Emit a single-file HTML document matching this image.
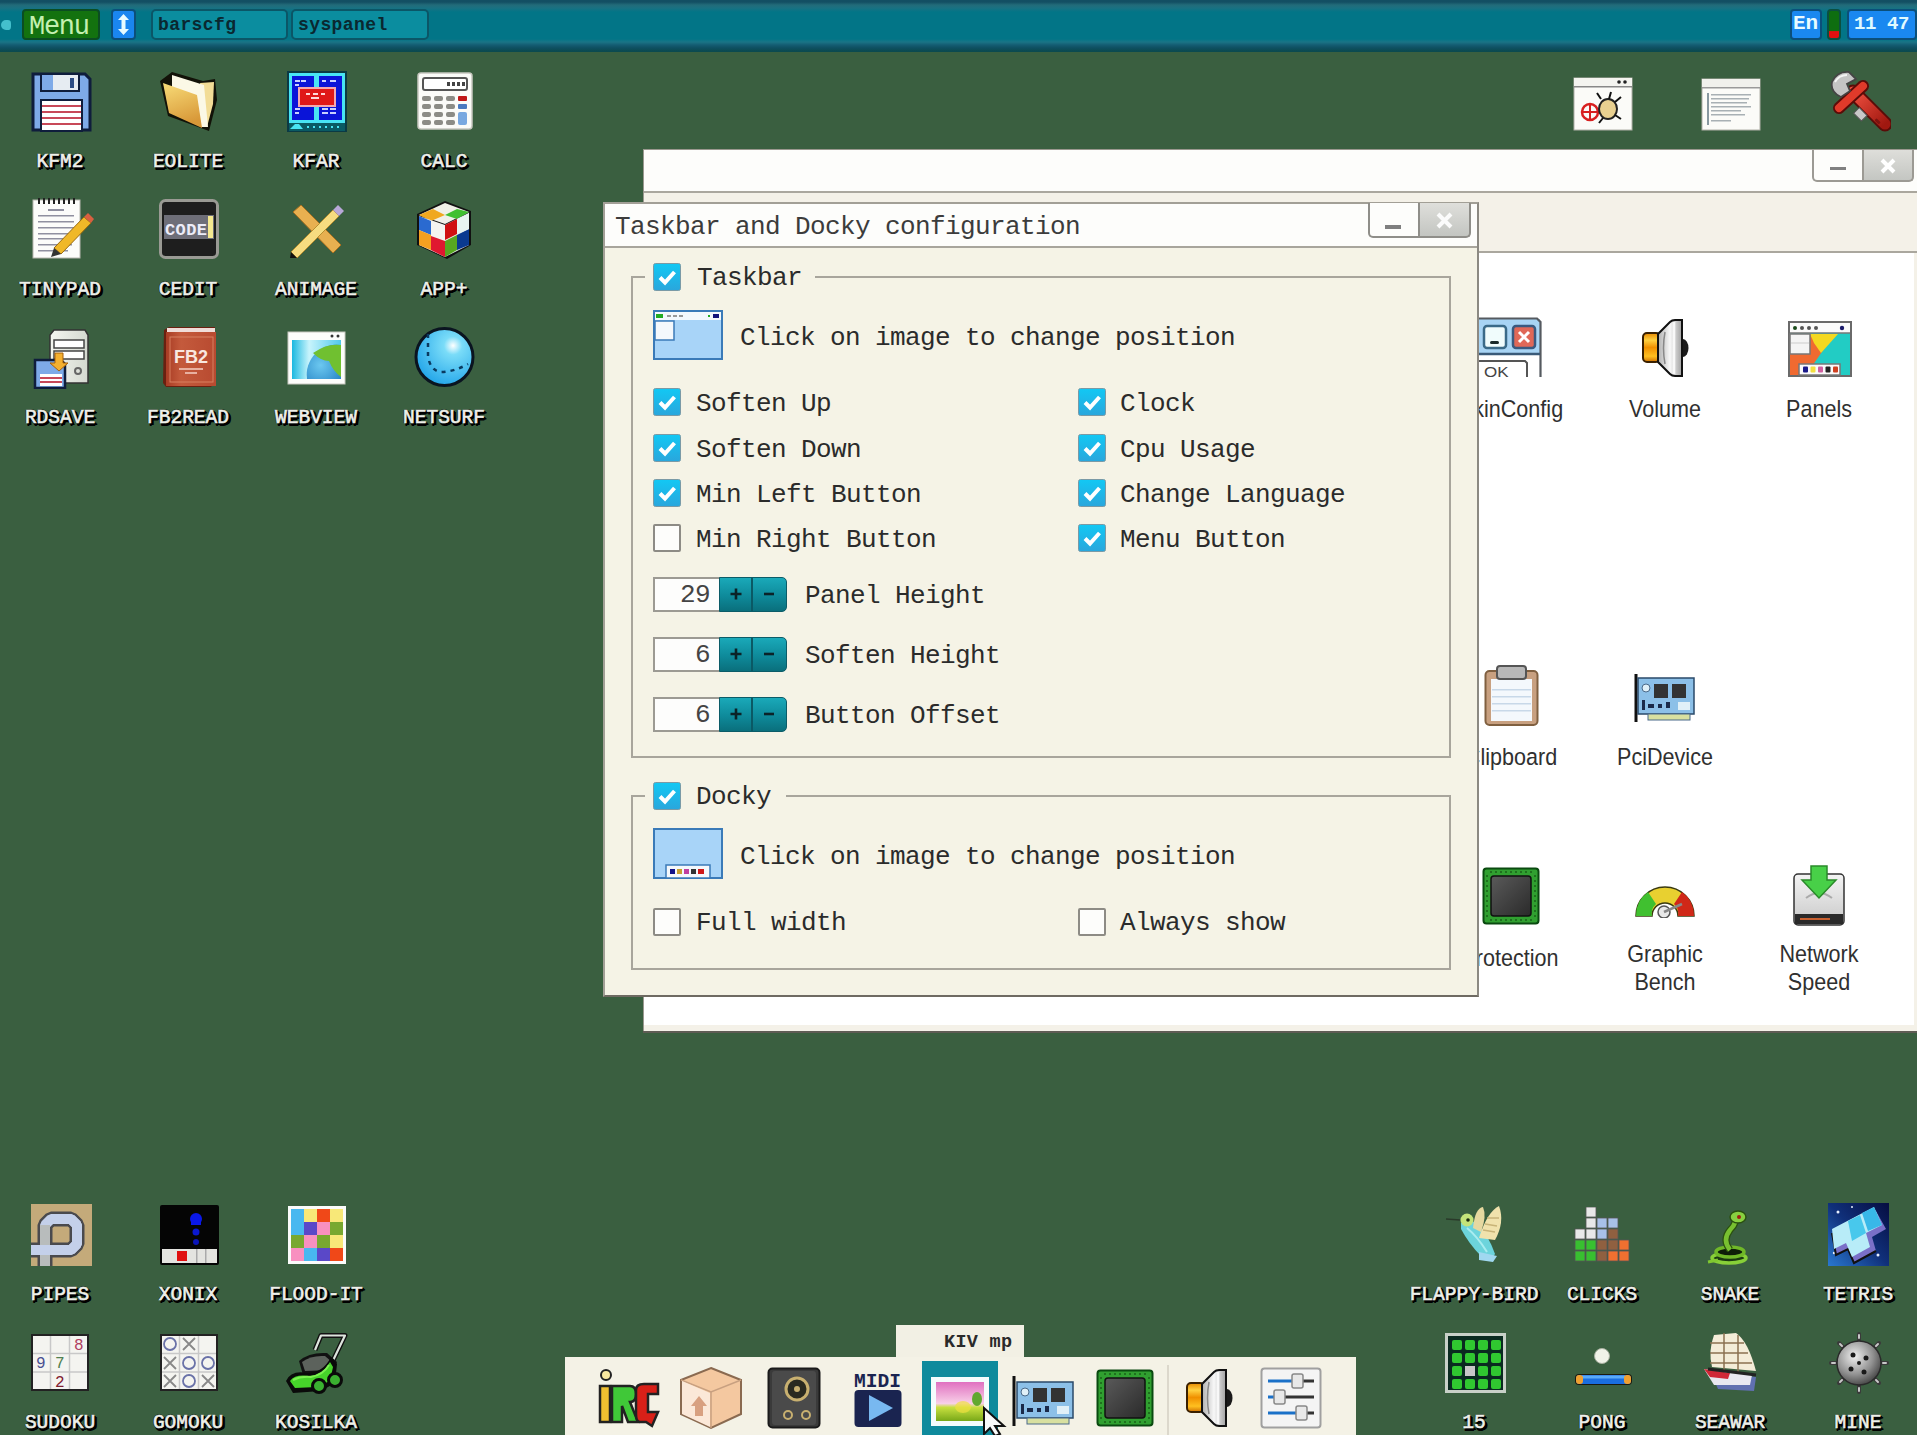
<!DOCTYPE html><html><head><meta charset="utf-8"><style>
*{margin:0;padding:0;box-sizing:border-box}
html,body{width:1917px;height:1435px;overflow:hidden}
body{position:relative;background:#3a5f40;font-family:"Liberation Sans",sans-serif}
div,svg{position:absolute}
.mono{font-family:"Liberation Mono",monospace;white-space:pre}
.lbl{font-family:"Liberation Mono",monospace;font-weight:normal;-webkit-text-stroke:0.6px #eef0ea;font-size:19.5px;color:#eef0ea;text-shadow:2px 2px 0 #000,1px 2px 0 #000,2px 1px 0 #000,1px 3px 0 #000,3px 2px 0 #000,-1px 0 0 rgba(0,0,0,.6),0 -1px 0 rgba(0,0,0,.4);white-space:pre;width:200px;text-align:center;line-height:20px}
.dt{font-family:"Liberation Mono",monospace;font-size:26px;letter-spacing:-0.6px;color:#2b2b2b;white-space:pre;line-height:30px}
.lab{font-size:24.5px;color:#303030;white-space:pre;text-align:center;width:200px;line-height:28px;transform:scaleX(0.88)}
</style></head><body>
<div style="left:0px;top:0px;width:1917px;height:52px;background:linear-gradient(#134f63 0,#134f63 2px,#226b79 5px,#1a7182 8px,#027587 12px,#027587 39px,#1a7486 42px,#145c72 45px,#0e4f60 48px,#0b4a50 51px)"></div>
<div style="left:1px;top:20px;width:10px;height:10px;background:#44c0cc;border-radius:60% 40% 40% 60%"></div>
<div style="left:22px;top:9px;width:78px;height:31px;background:#13720f;border:2px solid #0b4d22;border-radius:4px"></div>
<div class="mono" style="left:29px;top:12px;font-size:27px;color:#c4f0b0;letter-spacing:-1.3px;line-height:30px">Menu</div>
<div style="left:111px;top:9px;width:25px;height:31px;background:#1a86f0;border:2px solid #0b4f7a;border-radius:4px"></div>
<svg style="left:113px;top:11px" width="21" height="27" viewBox="0 0 21 27"><path d="M10.5 3L16 9H12.5V18H16L10.5 24L5 18H8.5V9H5Z" fill="#e8fbff"/></svg>
<div style="left:151px;top:9px;width:137px;height:31px;background:#0b8d9f;border:2px solid #0b5667;border-radius:5px"></div>
<div class="mono" style="left:158px;top:12px;font-size:18px;font-weight:bold;color:#0a2830;line-height:26px;letter-spacing:0.4px">barscfg</div>
<div style="left:291px;top:9px;width:138px;height:31px;background:#0b8d9f;border:2px solid #0b5667;border-radius:5px"></div>
<div class="mono" style="left:298px;top:12px;font-size:18px;font-weight:bold;color:#0a2830;line-height:26px;letter-spacing:0.4px">syspanel</div>
<div style="left:1790px;top:9px;width:32px;height:31px;background:#1a88f0;border:2px solid #0b4f7a;border-radius:4px"></div>
<div class="mono" style="left:1793px;top:11px;font-size:21px;font-weight:bold;color:#e8fbff;line-height:26px">En</div>
<div style="left:1827px;top:9px;width:14px;height:31px;background:linear-gradient(#0e6e10 0,#0e6e10 75%,#e01010 76%);border:2px solid #0b4f40;border-radius:4px"></div>
<div style="left:1847px;top:9px;width:70px;height:31px;background:#1a88f0;border:2px solid #0b4f7a;border-radius:4px"></div>
<div class="mono" style="left:1854px;top:11px;font-size:19px;font-weight:bold;color:#e0faff;line-height:26px;letter-spacing:-0.4px">11 47</div>
<div class="lbl" style="left:-40px;top:152px;">KFM2</div>
<div class="lbl" style="left:88px;top:152px;">EOLITE</div>
<div class="lbl" style="left:216px;top:152px;">KFAR</div>
<div class="lbl" style="left:344px;top:152px;">CALC</div>
<div class="lbl" style="left:-40px;top:280px;">TINYPAD</div>
<div class="lbl" style="left:88px;top:280px;">CEDIT</div>
<div class="lbl" style="left:216px;top:280px;">ANIMAGE</div>
<div class="lbl" style="left:344px;top:280px;">APP+</div>
<div class="lbl" style="left:-40px;top:408px;">RDSAVE</div>
<div class="lbl" style="left:88px;top:408px;">FB2READ</div>
<div class="lbl" style="left:216px;top:408px;">WEBVIEW</div>
<div class="lbl" style="left:344px;top:408px;">NETSURF</div>
<div class="lbl" style="left:-40px;top:1285px;">PIPES</div>
<div class="lbl" style="left:88px;top:1285px;">XONIX</div>
<div class="lbl" style="left:216px;top:1285px;">FLOOD-IT</div>
<div class="lbl" style="left:-40px;top:1413px;">SUDOKU</div>
<div class="lbl" style="left:88px;top:1413px;">GOMOKU</div>
<div class="lbl" style="left:216px;top:1413px;">KOSILKA</div>
<div class="lbl" style="left:1374px;top:1285px;">FLAPPY-BIRD</div>
<div class="lbl" style="left:1502px;top:1285px;">CLICKS</div>
<div class="lbl" style="left:1630px;top:1285px;">SNAKE</div>
<div class="lbl" style="left:1758px;top:1285px;">TETRIS</div>
<div class="lbl" style="left:1374px;top:1413px;">15</div>
<div class="lbl" style="left:1502px;top:1413px;">PONG</div>
<div class="lbl" style="left:1630px;top:1413px;">SEAWAR</div>
<div class="lbl" style="left:1758px;top:1413px;">MINE</div>
<svg width="0" height="0" style="left:0;top:0"><defs>
<linearGradient id="gFold" x1="0" y1="0" x2="0.3" y2="1"><stop offset="0" stop-color="#f8dc78"/><stop offset="1" stop-color="#d89838"/></linearGradient>
<radialGradient id="gBall" cx="0.65" cy="0.3" r="0.8"><stop offset="0" stop-color="#ffffff"/><stop offset="0.2" stop-color="#7adcf8"/><stop offset="1" stop-color="#1aa0e8"/></radialGradient>
<linearGradient id="gCase" x1="0" y1="0" x2="1" y2="0"><stop offset="0" stop-color="#f4f6f0"/><stop offset="1" stop-color="#d4d8d0"/></linearGradient>
<linearGradient id="gBook" x1="0" y1="0" x2="1" y2="0"><stop offset="0" stop-color="#a83c24"/><stop offset="0.3" stop-color="#c45a3c"/><stop offset="1" stop-color="#b84a30"/></linearGradient>
<linearGradient id="gSky" x1="0" y1="0" x2="1" y2="0"><stop offset="0" stop-color="#1ab8e0"/><stop offset="0.35" stop-color="#c8f4fc"/><stop offset="1" stop-color="#50c8ec"/></linearGradient>
<radialGradient id="gEarth" cx="0.4" cy="0.6" r="0.7"><stop offset="0" stop-color="#6cc8f0"/><stop offset="1" stop-color="#2a88c8"/></radialGradient>
<linearGradient id="gWr" x1="0" y1="0" x2="1" y2="1"><stop offset="0" stop-color="#f05040"/><stop offset="1" stop-color="#a01810"/></linearGradient>
<linearGradient id="gSpk" x1="0" y1="0" x2="0" y2="1"><stop offset="0" stop-color="#e88a00"/><stop offset="0.25" stop-color="#ffd040"/><stop offset="0.5" stop-color="#f09000"/><stop offset="0.8" stop-color="#ffc020"/><stop offset="1" stop-color="#d07000"/></linearGradient>
<linearGradient id="gCone" x1="0" y1="0" x2="1" y2="0"><stop offset="0" stop-color="#b0b0b0"/><stop offset="0.5" stop-color="#f8f8f8"/><stop offset="1" stop-color="#a0a0a0"/></linearGradient>
<linearGradient id="gKiv" x1="0" y1="0" x2="0" y2="1"><stop offset="0" stop-color="#e070c0"/><stop offset="0.55" stop-color="#f8d0e8"/><stop offset="0.65" stop-color="#c8e040"/><stop offset="1" stop-color="#78a818"/></linearGradient>
<radialGradient id="gMine" cx="0.4" cy="0.35" r="0.7"><stop offset="0" stop-color="#f0f0f0"/><stop offset="0.6" stop-color="#909090"/><stop offset="1" stop-color="#404040"/></radialGradient>
<linearGradient id="gTet" x1="0" y1="0" x2="1" y2="1"><stop offset="0" stop-color="#0a2a78"/><stop offset="1" stop-color="#0a1a50"/></linearGradient>
<linearGradient id="gHdd" x1="0" y1="0" x2="0" y2="1"><stop offset="0" stop-color="#f4f4f4"/><stop offset="1" stop-color="#c8c8c8"/></linearGradient>
<linearGradient id="gChip" x1="0" y1="0" x2="1" y2="1"><stop offset="0" stop-color="#5a5a5a"/><stop offset="1" stop-color="#2a2a2a"/></linearGradient>
</defs></svg>
<svg style="left:31px;top:72px" width="61" height="60" viewBox="0 0 61 60"><path d="M2 2H54L59 7V58H2Z" fill="#7eaae8" stroke="#0f1d3c" stroke-width="3"/>
<rect x="9" y="1" width="40" height="19" fill="#0f1d3c"/><rect x="11" y="3" width="36" height="15" fill="#7eaae8"/>
<rect x="22" y="3" width="25" height="15" fill="#e6ecf2"/><rect x="39" y="6" width="4" height="10" fill="#2c4c84"/>
<rect x="9" y="27" width="43" height="33" fill="#0f1d3c"/><rect x="11" y="29" width="39" height="29" fill="#ffffff"/>
<rect x="11" y="33" width="39" height="2" fill="#c84858"/><rect x="11" y="39" width="39" height="2" fill="#c84858"/><rect x="11" y="45" width="39" height="2" fill="#c84858"/><rect x="11" y="51" width="39" height="2" fill="#c84858"/></svg>
<svg style="left:158px;top:70px" width="60" height="62" viewBox="0 0 60 62"><path d="M2 11L14 2L45 11L57 9L59 30L51 61L10 46Z" fill="#121208"/>
<path d="M42 13L56 12L55 34L49 57Z" fill="#f2dc96"/>
<path d="M14 5L46 15L50 57L42 57L38 26L14 17Z" fill="#fbf8e6"/>
<path d="M5 13L39 25L44 58L11 43Z" fill="url(#gFold)"/></svg>
<svg style="left:287px;top:71px" width="60" height="61" viewBox="0 0 60 61"><rect x="0" y="0" width="60" height="61" fill="#0b3a44"/><rect x="2" y="2" width="56" height="50" fill="#48e4f4"/>
<rect x="5" y="5" width="22" height="44" fill="#0a14d8"/><rect x="32" y="5" width="23" height="44" fill="#0a14d8"/>
<g fill="#c8d0ff"><rect x="8" y="9" width="5" height="2"/><rect x="14" y="9" width="5" height="2"/><rect x="8" y="13" width="4" height="2"/><rect x="8" y="37" width="5" height="2"/><rect x="8" y="41" width="4" height="2"/><rect x="35" y="37" width="6" height="2"/><rect x="43" y="37" width="6" height="2"/><rect x="35" y="41" width="6" height="2"/><rect x="43" y="41" width="6" height="2"/><rect x="35" y="9" width="4" height="2"/><rect x="43" y="9" width="6" height="2"/></g>
<rect x="11" y="16" width="38" height="20" fill="#f4a8b0"/><rect x="13" y="18" width="34" height="16" fill="#e01818"/>
<g fill="#ffd8d8"><rect x="19" y="22" width="4" height="2"/><rect x="26" y="22" width="5" height="2"/><rect x="34" y="22" width="4" height="2"/><rect x="24" y="26" width="8" height="2"/></g>
<rect x="2" y="52" width="56" height="8" fill="#0a5a64"/><path d="M3 58L8 53H12L16 58Z" fill="#48e4f4"/>
<g fill="#48e4f4"><rect x="20" y="55" width="2" height="2"/><rect x="26" y="55" width="2" height="2"/><rect x="32" y="55" width="2" height="2"/><rect x="38" y="55" width="2" height="2"/><rect x="44" y="55" width="2" height="2"/><rect x="50" y="55" width="2" height="2"/></g></svg>
<svg style="left:417px;top:72px" width="56" height="58" viewBox="0 0 56 58"><rect x="1" y="1" width="54" height="56" rx="3" fill="#fbfbf8" stroke="#c8c8c0" stroke-width="1.5"/>
<rect x="6" y="6" width="44" height="12" rx="2" fill="#fff" stroke="#555" stroke-width="2"/>
<g fill="#444"><rect x="30" y="10" width="3" height="4"/><rect x="35" y="10" width="3" height="4"/><rect x="40" y="10" width="3" height="4"/><rect x="45" y="10" width="3" height="4"/></g>
<g fill="#8c8c86"><rect x="5" y="24" width="9" height="5" rx="2"/><rect x="17" y="24" width="9" height="5" rx="2"/><rect x="29" y="24" width="9" height="5" rx="2"/>
<rect x="5" y="32" width="9" height="5" rx="2"/><rect x="17" y="32" width="9" height="5" rx="2"/><rect x="29" y="32" width="9" height="5" rx="2"/>
<rect x="5" y="40" width="9" height="5" rx="2"/><rect x="17" y="40" width="9" height="5" rx="2"/><rect x="29" y="40" width="9" height="5" rx="2"/>
<rect x="5" y="48" width="9" height="5" rx="2"/><rect x="17" y="48" width="9" height="5" rx="2"/><rect x="29" y="48" width="9" height="5" rx="2"/></g>
<rect x="41" y="24" width="9" height="5" rx="1" fill="#c01818"/><rect x="41" y="32" width="9" height="5" rx="1" fill="#4a7ac0"/><rect x="41" y="40" width="9" height="13" rx="2" fill="#78a8e0"/></svg>
<svg style="left:32px;top:198px" width="62" height="62" viewBox="0 0 62 62"><rect x="1" y="2" width="47" height="58" fill="#fcfcfa" stroke="#b8b8b0" stroke-width="1"/>
<g fill="#222"><rect x="6" y="0" width="2" height="6"/><rect x="11" y="0" width="2" height="6"/><rect x="16" y="0" width="2" height="6"/><rect x="21" y="0" width="2" height="6"/><rect x="26" y="0" width="2" height="6"/><rect x="31" y="0" width="2" height="6"/><rect x="36" y="0" width="2" height="6"/><rect x="41" y="0" width="2" height="6"/></g>
<g fill="#9090a0"><rect x="16" y="11" width="16" height="2"/><rect x="6" y="17" width="36" height="1.5"/><rect x="6" y="23" width="36" height="1.5"/><rect x="6" y="29" width="36" height="1.5"/><rect x="6" y="35" width="36" height="1.5"/><rect x="6" y="40" width="30" height="1.5"/><rect x="6" y="46" width="34" height="1.5"/><rect x="6" y="52" width="30" height="1.5"/></g>
<path d="M22 50L52 19L59 25L29 56Z" fill="#f0b828" stroke="#9a6a10" stroke-width="1"/><path d="M52 19L56 15L62 21L59 25Z" fill="#d86040"/><path d="M22 50L29 56L19 59Z" fill="#333"/></svg>
<svg style="left:159px;top:199px" width="60" height="60" viewBox="0 0 60 60"><rect x="1.5" y="1.5" width="57" height="57" rx="5" fill="#1e1e1e" stroke="#9a9a94" stroke-width="3"/>
<rect x="5" y="16" width="50" height="24" fill="#6e6e78"/>
<text x="6" y="36" font-family="Liberation Mono" font-weight="bold" font-size="17" fill="#ececf8" textLength="42">CODE</text>
<rect x="49" y="17" width="5" height="22" fill="#f4e890"/></svg>
<svg style="left:289px;top:202px" width="56" height="56" viewBox="0 0 56 56"><path d="M4 10L12 3L52 43L44 51Z" fill="#e8b050" stroke="#a87020" stroke-width="1"/>
<path d="M2 50L44 8L50 14L8 56Z" fill="#f6dc80" stroke="#b89030" stroke-width="1"/>
<path d="M44 8L49 3L55 9L50 14Z" fill="#b8a8d8"/><path d="M2 50L8 56L1 56Z" fill="#111"/></svg>
<svg style="left:415px;top:199px" width="58" height="61" viewBox="0 0 58 61"><path d="M2 15L30 2L56 12L56 46L32 60L2 46Z" fill="#111"/>
<path d="M4 16L30 4L54 13L30 25Z" fill="#f0f0e8"/><path d="M4 16L18 10L30 16L16 22Z" fill="#f0a820"/><path d="M30 16L42 10L54 13L42 20Z" fill="#40c030"/>
<path d="M4 17L30 26L30 58L4 46Z" fill="#f4f4f0"/><path d="M4 17L16 22L16 36L4 31Z" fill="#2a6ad0"/><path d="M4 31L16 36L16 51L4 46Z" fill="#f4a020"/><path d="M16 37L30 42L30 58L16 51Z" fill="#e01830"/>
<path d="M30 26L54 14L54 46L30 58Z" fill="#e8f0f0"/><path d="M30 26L42 20L42 35L30 41Z" fill="#d01010"/><path d="M30 42L42 36L42 51L30 58Z" fill="#58a820"/><path d="M42 36L54 30L54 46L42 51Z" fill="#0a3a90"/><path d="M42 20L54 14L54 30L42 35Z" fill="#e8f4f0"/></svg>
<svg style="left:33px;top:327px" width="57" height="62" viewBox="0 0 57 62"><path d="M17 8L21 3H52L55 8V56H17Z" fill="url(#gCase)" stroke="#333" stroke-width="1.5"/>
<rect x="21" y="13" width="30" height="8" fill="#fff" stroke="#444" stroke-width="1.5"/><rect x="21" y="24" width="30" height="8" fill="#fff" stroke="#444" stroke-width="1.5"/>
<circle cx="45" cy="44" r="3" fill="none" stroke="#666" stroke-width="2"/>
<path d="M2 33H28L32 37V61H2Z" fill="#7eaae8" stroke="#0f1d3c" stroke-width="2.5"/><rect x="7" y="47" width="22" height="12" fill="#fff"/><rect x="7" y="50" width="22" height="2" fill="#c84858"/><rect x="7" y="54" width="22" height="2" fill="#c84858"/>
<path d="M22 26H30V36H35L26 44L17 36H22Z" fill="#f4b030" stroke="#a86008" stroke-width="1"/></svg>
<svg style="left:161px;top:326px" width="57" height="62" viewBox="0 0 57 62"><path d="M3 4L8 1H54V56L50 61H5L2 57Z" fill="#6a2010"/><rect x="6" y="2" width="48" height="5" fill="#f0dcd8"/>
<rect x="5" y="6" width="50" height="54" fill="url(#gBook)"/><rect x="9" y="11" width="43" height="45" fill="none" stroke="#d88060" stroke-width="1"/>
<text x="13" y="37" font-family="Liberation Sans" font-weight="bold" font-size="18" fill="#f8e8e0">FB2</text>
<rect x="18" y="42" width="24" height="2" fill="#e8b0a0"/><rect x="24" y="46" width="12" height="2" fill="#e8b0a0"/></svg>
<svg style="left:287px;top:331px" width="59" height="54" viewBox="0 0 59 54"><rect x="1" y="1" width="57" height="52" fill="#fdfdfb" stroke="#c8c8c0" stroke-width="1"/>
<circle cx="45" cy="5" r="1.5" fill="#333"/><circle cx="51" cy="5" r="1.5" fill="#333"/>
<rect x="5" y="9" width="49" height="39" fill="url(#gSky)"/>
<path d="M20 48A30 30 0 0 1 54 14V48Z" fill="url(#gEarth)"/><path d="M26 22Q40 12 54 14V46Q46 40 42 30Q34 30 26 22Z" fill="#70c030"/></svg>
<svg style="left:414px;top:326px" width="61" height="62" viewBox="0 0 61 62"><circle cx="30.5" cy="31" r="28.5" fill="url(#gBall)" stroke="#0a1420" stroke-width="3"/>
<path d="M14 8V30Q16 44 26 46Q40 46 54 38" fill="none" stroke="#0a3a60" stroke-width="2.5" stroke-dasharray="4 5"/></svg>
<svg style="left:1573px;top:77px" width="60" height="54" viewBox="0 0 60 54"><rect x="1" y="1" width="58" height="52" fill="#fbfbf8" stroke="#b0b0a8" stroke-width="1"/><rect x="1" y="1" width="58" height="8" fill="#f4f4f0"/>
<rect x="1" y="9" width="58" height="1.5" fill="#888"/><circle cx="46" cy="5" r="1.8" fill="#222"/><circle cx="52" cy="5" r="1.8" fill="#222"/>
<circle cx="17" cy="35" r="8" fill="none" stroke="#d82020" stroke-width="2.5"/><path d="M17 27V43M9 35H25" stroke="#d82020" stroke-width="2"/>
<ellipse cx="35" cy="32" rx="9" ry="10" fill="#e8d090" stroke="#222" stroke-width="2"/><path d="M28 22L24 16M36 22L38 15M42 25L48 20M42 38L48 42M30 41L26 46" stroke="#111" stroke-width="2"/></svg>
<svg style="left:1701px;top:78px" width="60" height="53" viewBox="0 0 60 53"><rect x="1" y="1" width="58" height="51" fill="#fbfbf8" stroke="#b0b0a8" stroke-width="1"/><rect x="1" y="1" width="58" height="8" fill="#f0f0ec"/><rect x="1" y="9" width="58" height="1.5" fill="#999"/>
<g fill="#8898a0"><rect x="6" y="15" width="2" height="32"/></g>
<g fill="#a8b0b4"><rect x="10" y="16" width="40" height="1.5"/><rect x="10" y="20" width="38" height="1.5"/><rect x="10" y="24" width="36" height="1.5"/><rect x="10" y="28" width="40" height="1.5"/><rect x="10" y="32" width="30" height="1.5"/><rect x="10" y="36" width="34" height="1.5"/><rect x="10" y="42" width="20" height="1.5"/></g></svg>
<svg style="left:1829px;top:70px" width="62" height="64" viewBox="0 0 62 64"><path d="M24 22L56 54" stroke="#5a0c08" stroke-width="15" stroke-linecap="round"/><path d="M24 22L56 54" stroke="url(#gWr)" stroke-width="11" stroke-linecap="round"/>
<path d="M10 38L34 16" stroke="#5a0c08" stroke-width="12" stroke-linecap="round"/><path d="M10 38L34 16" stroke="#e03a2a" stroke-width="8" stroke-linecap="round"/>
<path d="M3 12Q8 1 20 2L27 9L18 14L21 21L12 27Q1 22 3 12Z" fill="#c4c4c4" stroke="#444" stroke-width="1.8"/><path d="M6 12Q10 5 18 5" fill="none" stroke="#f4f4f4" stroke-width="2"/>
<rect x="26" y="40" width="11" height="8" fill="#c8c8c8" stroke="#555" stroke-width="1" transform="rotate(45 31 44)"/><rect x="46" y="50" width="6" height="3" rx="1" fill="#7a1410" transform="rotate(45 49 51)"/></svg>
<svg style="left:31px;top:1204px" width="61" height="62" viewBox="0 0 61 62"><rect x="0" y="0" width="61" height="62" fill="#c4aa7a"/>
<path d="M0 46H40L46 40V21L40 15H20L14 21V62" fill="none" stroke="#4a4a4e" stroke-width="15" stroke-linejoin="bevel"/>
<path d="M0 46H40L46 40V21L40 15H20L14 21V62" fill="none" stroke="#c4d0ea" stroke-width="10" stroke-linejoin="bevel"/>
<path d="M14 21V62" stroke="#b8bcbc" stroke-width="10"/><path d="M0 46H40L46 40V21L40 15H20" fill="none" stroke="#c4d0ea" stroke-width="10" stroke-linejoin="bevel"/></svg>
<svg style="left:160px;top:1205px" width="59" height="60" viewBox="0 0 59 60"><rect x="0" y="0" width="59" height="60" rx="2" fill="#050505"/>
<circle cx="36" cy="14" r="6" fill="#0a18e8"/><rect x="31" y="14" width="10" height="6" fill="#0a18e8"/><circle cx="36" cy="27" r="3.5" fill="#0a18d0"/><circle cx="36" cy="37" r="3" fill="#0a14b8"/>
<rect x="2" y="44" width="55" height="14" fill="#e4e4e0"/><rect x="17" y="46" width="10" height="10" fill="#e01010"/><rect x="36" y="44" width="1.5" height="14" fill="#aaa"/><rect x="45" y="44" width="1.5" height="14" fill="#aaa"/></svg>
<svg style="left:288px;top:1206px" width="58" height="58" viewBox="0 0 58 58"><rect x="0" y="0" width="58" height="58" fill="#fbfbfb"/>
<rect x="3" y="3" width="13" height="13" fill="#48b8f0"/><rect x="16" y="3" width="13" height="13" fill="#f8e878"/><rect x="29" y="3" width="13" height="13" fill="#f04818"/><rect x="42" y="3" width="13" height="13" fill="#f8e878"/>
<rect x="3" y="16" width="13" height="13" fill="#48b8f0"/><rect x="16" y="16" width="13" height="13" fill="#5a48c8"/><rect x="29" y="16" width="13" height="13" fill="#f890c0"/><rect x="42" y="16" width="13" height="13" fill="#78a830"/>
<rect x="3" y="29" width="13" height="13" fill="#78a830"/><rect x="16" y="29" width="13" height="13" fill="#f890c0"/><rect x="29" y="29" width="13" height="13" fill="#78a830"/><rect x="42" y="29" width="13" height="13" fill="#f8e878"/>
<rect x="3" y="42" width="13" height="13" fill="#f890c0"/><rect x="16" y="42" width="13" height="13" fill="#48b8f0"/><rect x="29" y="42" width="13" height="13" fill="#5a48c8"/><rect x="42" y="42" width="13" height="13" fill="#f04818"/></svg>
<svg style="left:31px;top:1334px" width="58" height="57" viewBox="0 0 58 57"><rect x="1" y="1" width="56" height="55" fill="#f4f4f0" stroke="#222" stroke-width="2"/>
<path d="M19.5 2V55M38.5 2V55M2 19.5H56M2 38H56" stroke="#c8c8c8" stroke-width="1.5"/>
<text x="43" y="16" font-family="Liberation Mono" font-size="16" fill="#b04060">8</text><text x="5" y="34" font-family="Liberation Mono" font-size="16" fill="#4a5090">9</text>
<text x="24" y="34" font-family="Liberation Mono" font-size="16" fill="#508050">7</text><text x="24" y="53" font-family="Liberation Mono" font-size="16" fill="#802030">2</text></svg>
<svg style="left:160px;top:1334px" width="58" height="57" viewBox="0 0 58 57"><rect x="1" y="1" width="56" height="55" fill="#f4f4f0" stroke="#222" stroke-width="2"/>
<path d="M19.5 2V55M38.5 2V55M2 19.5H56M2 38H56" stroke="#c8c8c8" stroke-width="1.5"/>
<g fill="none" stroke="#6a72a8" stroke-width="1.8"><circle cx="10" cy="10" r="6"/><circle cx="29" cy="29" r="6"/><circle cx="48" cy="29" r="6"/><circle cx="29" cy="47" r="6"/></g>
<g stroke="#888" stroke-width="1.8"><path d="M23 4L35 16M35 4L23 16M4 23L16 35M16 23L4 35M4 41L16 53M16 41L4 53M42 41L54 53M54 41L42 53"/></g></svg>
<svg style="left:281px;top:1331px" width="68" height="64" viewBox="0 0 68 64"><path d="M34 19L40 4.5H64L47 40" fill="none" stroke="#111" stroke-width="5" stroke-linejoin="round"/><path d="M34 19L40 4.5H64L47 40" fill="none" stroke="#dde4dd" stroke-width="2.2" stroke-linejoin="round"/>
<path d="M18 30Q28 21 46 22L56 31L52 42L22 44Z" fill="#111"/><path d="M21 31Q30 24 44 25L52 32L49 39L24 40Z" fill="#5c625c"/>
<path d="M5 50Q10 39 26 42Q42 42 50 26L56 33L54 52L40 60L12 62Z" fill="#0a0a0a"/>
<path d="M9 50Q14 43 28 45Q42 44 49 31L52 36L49 50L36 56L14 57Z" fill="#46d42a"/><path d="M12 49Q20 45 30 46Q42 44 48 34" fill="none" stroke="#7cf050" stroke-width="2"/>
<circle cx="38" cy="55" r="6.5" fill="#3ab030" stroke="#0a0a0a" stroke-width="3"/><circle cx="54" cy="49" r="6.5" fill="#3ab030" stroke="#0a0a0a" stroke-width="3"/></svg>
<svg style="left:1443px;top:1204px" width="64" height="60" viewBox="0 0 64 60"><path d="M3 15L17 16" stroke="#2a3a2a" stroke-width="1.5"/>
<path d="M18 19Q24 12 34 20Q46 32 52 50L48 56L38 52Q26 40 18 25Z" fill="#6cd4dc"/><path d="M36 48L54 52L50 58L36 56Z" fill="#a0d8f0"/><path d="M24 24Q34 32 44 48" fill="none" stroke="#a8ecf0" stroke-width="2"/>
<circle cx="24" cy="16" r="6.5" fill="#c4e47a"/><circle cx="25" cy="16" r="1.8" fill="#1a2a10"/>
<path d="M30 24Q32 4 40 3Q44 12 38 28Z" fill="#e6d8a0"/><path d="M36 34Q44 8 56 2Q62 18 52 36Z" fill="#f0e2ac"/><path d="M42 20L54 22M40 26L52 28M44 14L56 14" stroke="#c8b478" stroke-width="1.5"/></svg>
<svg style="left:1573px;top:1207px" width="60" height="60" viewBox="0 0 60 60"><g stroke="#555" stroke-width="0.8">
<rect x="13" y="0" width="10" height="10" fill="#e8e8e8"/>
<rect x="13" y="11" width="10" height="10" fill="#e8e8e8"/><rect x="24" y="11" width="10" height="10" fill="#a8c0e8"/><rect x="35" y="11" width="10" height="10" fill="#a8c0e8"/>
<rect x="2" y="22" width="10" height="10" fill="#e8e8e8"/><rect x="13" y="22" width="10" height="10" fill="#e8e8e8"/><rect x="24" y="22" width="10" height="10" fill="#a8c0e8"/><rect x="35" y="22" width="10" height="10" fill="#906040"/>
<rect x="2" y="33" width="10" height="10" fill="#38c030"/><rect x="13" y="33" width="10" height="10" fill="#38c030"/><rect x="24" y="33" width="10" height="10" fill="#906040"/><rect x="35" y="33" width="10" height="10" fill="#906040"/><rect x="46" y="33" width="10" height="10" fill="#f07030"/>
<rect x="2" y="44" width="10" height="10" fill="#38c030"/><rect x="13" y="44" width="10" height="10" fill="#38c030"/><rect x="24" y="44" width="10" height="10" fill="#906040"/><rect x="35" y="44" width="10" height="10" fill="#f07030"/><rect x="46" y="44" width="10" height="10" fill="#f07030"/></g></svg>
<svg style="left:1704px;top:1208px" width="48" height="58" viewBox="0 0 48 58"><ellipse cx="25" cy="50" rx="18" ry="6" fill="#1a3a10"/><ellipse cx="25" cy="50" rx="17" ry="5" fill="none" stroke="#88d038" stroke-width="3.5"/>
<ellipse cx="26" cy="44" rx="14" ry="5" fill="#0e1e08" stroke="#70b828" stroke-width="3.5"/><path d="M4 54L14 52" stroke="#80c830" stroke-width="3"/>
<path d="M26 42Q18 32 26 22Q34 14 30 8" fill="none" stroke="#2a5010" stroke-width="7"/><path d="M26 42Q18 32 26 22Q34 14 30 8" fill="none" stroke="#78c030" stroke-width="4.5"/>
<ellipse cx="34" cy="9" rx="8" ry="6" fill="#88d040" stroke="#2a5010" stroke-width="1.5"/><circle cx="35" cy="9" r="2" fill="#a02010"/></svg>
<svg style="left:1828px;top:1203px" width="61" height="63" viewBox="0 0 61 63"><defs><linearGradient id="gTet2" x1="0" y1="1" x2="1" y2="0"><stop offset="0" stop-color="#2a78d0"/><stop offset="0.5" stop-color="#10307a"/><stop offset="1" stop-color="#060c40"/></linearGradient></defs>
<rect x="0" y="0" width="61" height="63" fill="url(#gTet2)"/>
<g fill="#e8f0ff"><circle cx="10" cy="9" r="1.5"/><circle cx="50" cy="52" r="1.5"/><circle cx="6" cy="50" r="1.2"/><circle cx="24" cy="4" r="1"/></g>
<path d="M4 30L48 8L58 26L44 34L48 48L26 60L20 46L8 52Z" fill="#7a70c8"/><path d="M4 30L8 52L20 46L26 60L48 48" fill="none" stroke="#111" stroke-width="2"/>
<path d="M4 26L46 4L54 22L38 30L42 44L24 54L18 40L6 46Z" fill="#b8ecf8"/><path d="M20 18L32 12L38 30L24 38Z" fill="#48c8ec"/><path d="M34 10L46 4L54 22L40 28Z" fill="#38b8e8"/></svg>
<svg style="left:1445px;top:1333px" width="61" height="60" viewBox="0 0 61 60"><rect x="1.5" y="1.5" width="58" height="57" fill="#0a2a20" stroke="#c8d0c8" stroke-width="3"/>
<g fill="#30c830">
<rect x="7" y="7" width="10" height="10" rx="2"/><rect x="20" y="7" width="10" height="10" rx="2"/><rect x="33" y="7" width="10" height="10" rx="2"/><rect x="46" y="7" width="10" height="10" rx="2"/>
<rect x="7" y="20" width="10" height="10" rx="2"/><rect x="20" y="20" width="10" height="10" rx="2"/><rect x="33" y="20" width="10" height="10" rx="2"/><rect x="46" y="20" width="10" height="10" rx="2"/>
<rect x="7" y="33" width="10" height="10" rx="2"/><rect x="33" y="33" width="10" height="10" rx="2"/><rect x="46" y="33" width="10" height="10" rx="2"/>
<rect x="7" y="46" width="10" height="10" rx="2"/><rect x="20" y="46" width="10" height="10" rx="2"/><rect x="33" y="46" width="10" height="10" rx="2"/><rect x="46" y="46" width="10" height="10" rx="2"/></g>
<rect x="20" y="33" width="10" height="10" fill="#c8c8c8"/></svg>
<svg style="left:1574px;top:1347px" width="60" height="40" viewBox="0 0 60 40"><circle cx="28" cy="9" r="7.5" fill="#f0f2e8" stroke="#a8b0a0" stroke-width="1"/><rect x="1" y="27" width="57" height="11" rx="4" fill="#1a1a10"/><rect x="2" y="28" width="55" height="9" rx="3.5" fill="#1a6ee0"/><rect x="8" y="28.5" width="43" height="3" fill="#5aaaf8"/><rect x="2" y="28" width="7" height="9" rx="3" fill="#f0a030"/><rect x="50" y="28" width="7" height="9" rx="3" fill="#f0a030"/></svg>
<svg style="left:1700px;top:1331px" width="62" height="64" viewBox="0 0 62 64"><path d="M10 40L56 46L54 60L18 58Z" fill="#6070b0"/><path d="M4 38L52 44L50 54L14 54Z" fill="#e8e8f0"/><path d="M4 38L30 42L28 48L10 46Z" fill="#d02838"/>
<path d="M12 36Q8 20 14 4L36 2Q48 10 56 40Z" fill="#f4ecd8"/><g stroke="#8a7050" stroke-width="1.5"><path d="M10 12H44M10 22H48M10 32H52"/><path d="M24 2V40M38 4V42"/></g>
<path d="M8 38L56 44" stroke="#222" stroke-width="3"/></svg>
<svg style="left:1828px;top:1331px" width="62" height="64" viewBox="0 0 62 64"><g stroke="#3a3a3a" stroke-width="4" stroke-linecap="round"><path d="M31 3V12M31 52V61M3 32H12M50 32H59M11 12L17 18M45 46L51 52M51 12L45 18M17 46L11 52"/></g>
<g stroke="#c8c8c8" stroke-width="2" stroke-linecap="round"><path d="M31 4V7M31 57V60M4 32H7M55 32H58M12 13L14 15M48 49L50 51M50 13L48 15M14 49L12 51"/></g>
<circle cx="31" cy="32" r="22" fill="url(#gMine)" stroke="#2a2a2a" stroke-width="1.5"/><g fill="#1a1a1a"><circle cx="25" cy="24" r="2.5"/><circle cx="38" cy="27" r="2.5"/><circle cx="23" cy="38" r="2.5"/><circle cx="36" cy="41" r="2.5"/><circle cx="31" cy="32" r="2"/></g></svg>
<div style="left:643px;top:149px;width:1274px;height:883px;background:#f4f1e8;border-left:1px solid #9a988f;border-top:1px solid #9a988f"></div>
<div style="left:644px;top:150px;width:1273px;height:41px;background:#fdfdfb"></div>
<div style="left:644px;top:191px;width:1273px;height:2px;background:#aaa79e"></div>
<div style="left:644px;top:251px;width:1273px;height:2px;background:#aaa79e"></div>
<div style="left:644px;top:253px;width:1270px;height:772px;background:#ffffff"></div>
<div style="left:643px;top:1031px;width:1274px;height:2px;background:#5e5c54"></div>
<div style="left:1812px;top:150px;width:52px;height:32px;background:#fdfdfb;border:2px solid #9c9a94;border-top:none;border-radius:0 0 0 5px"></div>
<div style="left:1830px;top:167px;width:16px;height:3px;background:#808080"></div>
<div style="left:1862px;top:150px;width:52px;height:32px;background:linear-gradient(#dededa,#c4c6c2);border:2px solid #9c9a94;border-top:none;border-radius:0 0 5px 0"></div>
<svg style="left:1880px;top:158px" width="16" height="16" viewBox="0 0 16 16"><path d="M2 2L14 14M14 2L2 14" stroke="#fff" stroke-width="4"/></svg>
<svg style="left:1479px;top:316px" width="64" height="64" viewBox="0 0 64 64"><rect x="-20" y="3" width="81" height="35" fill="#a8d4f4"/><path d="M-20 2.5H58L61.5 6V61" fill="none" stroke="#555a60" stroke-width="2.2"/><path d="M-20 38H61" stroke="#3a5a78" stroke-width="2.5"/>
<rect x="5" y="10" width="22" height="22" rx="3" fill="#f0fcfc" stroke="#3a6a88" stroke-width="2.5"/><rect x="11" y="25" width="9" height="3" rx="1.5" fill="#1a2a2a"/>
<rect x="34" y="10" width="22" height="22" rx="3" fill="#e06858" stroke="#3a5a80" stroke-width="2.5"/><path d="M40 16L50 26M50 16L40 26" stroke="#fff" stroke-width="3"/>
<path d="M-2 45H46L48 47V61" fill="none" stroke="#555" stroke-width="2"/><text x="5" y="68" font-family="Liberation Sans" font-size="17" fill="#444" transform="scale(1 0.9)">OK</text></svg>
<svg style="left:1640px;top:318px" width="52" height="60" viewBox="0 0 52 60"><ellipse cx="43" cy="30" rx="5.5" ry="9" fill="#1a1a1a"/>
<rect x="3" y="15" width="17" height="29" rx="4" fill="url(#gSpk)" stroke="#3a2000" stroke-width="2"/>
<path d="M18 16L30 4Q32 2 35 2H42V58H35Q32 58 30 56L18 44Z" fill="url(#gCone)" stroke="#111" stroke-width="2"/>
<path d="M34 4V56" stroke="#f8f8f8" stroke-width="2.5"/><path d="M25 14Q22 30 25 46" fill="none" stroke="#888" stroke-width="1.5"/></svg>
<svg style="left:1788px;top:321px" width="64" height="56" viewBox="0 0 64 56"><rect x="1" y="1" width="62" height="54" fill="#22ccc4" stroke="#6a6a6a" stroke-width="2"/>
<path d="M2 13H28L40 22L18 54H2Z" fill="#f06a30"/><path d="M22 13H50L33 32L26 22Z" fill="#f4d820"/>
<rect x="2" y="2" width="60" height="10" fill="#fafafa"/><path d="M2 12H62" stroke="#777" stroke-width="1.5"/>
<circle cx="7" cy="7" r="2" fill="#1a4a1a"/><circle cx="14" cy="7" r="2" fill="#555"/><circle cx="21" cy="7" r="2" fill="#555"/><circle cx="28" cy="7" r="2" fill="#555"/><circle cx="54" cy="7" r="2.2" fill="#1a1a6a"/>
<rect x="2" y="13" width="20" height="20" fill="#f4f4f4" stroke="#777" stroke-width="1.5"/><path d="M3 22H21" stroke="#ccc" stroke-width="1"/>
<rect x="11" y="43" width="41" height="11" fill="#fafafa" stroke="#777" stroke-width="1.5"/>
<rect x="15" y="45.5" width="5" height="6" rx="1" fill="#1a1a8a"/><rect x="22.5" y="45.5" width="5" height="6" rx="1" fill="#f4e040"/><rect x="30" y="45.5" width="5" height="6" rx="1" fill="#d060a0"/><rect x="37.5" y="45.5" width="5" height="6" rx="1" fill="#222"/><rect x="45" y="45.5" width="5" height="6" rx="1" fill="#d04020"/></svg>
<svg style="left:1484px;top:665px" width="55" height="62" viewBox="0 0 55 62"><rect x="1.5" y="6" width="52" height="54" rx="4" fill="#c8a080" stroke="#806040" stroke-width="2"/><rect x="7" y="14" width="41" height="42" fill="#f4f8fc"/>
<g fill="#c8d8e8"><rect x="8" y="24" width="39" height="1.5"/><rect x="8" y="31" width="39" height="1.5"/><rect x="8" y="38" width="39" height="1.5"/><rect x="8" y="45" width="39" height="1.5"/></g>
<rect x="13" y="1" width="29" height="13" rx="3" fill="#b8b8b8" stroke="#555" stroke-width="2"/></svg>
<svg style="left:1634px;top:672px" width="62" height="52" viewBox="0 0 62 52"><path d="M2 2V50" stroke="#111" stroke-width="3"/><rect x="4" y="6" width="56" height="36" fill="#8cc0e8" stroke="#2a4a6a" stroke-width="1.5"/>
<rect x="20" y="12" width="14" height="14" fill="#333"/><rect x="38" y="12" width="14" height="14" fill="#333"/><circle cx="12" cy="16" r="4" fill="#e0f0f8" stroke="#4a6a8a"/>
<g fill="#1a2a4a"><rect x="8" y="28" width="3" height="10"/><rect x="14" y="32" width="6" height="4"/><rect x="24" y="32" width="4" height="4"/><rect x="32" y="30" width="4" height="6"/></g>
<rect x="44" y="30" width="12" height="8" fill="#e0f0f8"/><rect x="14" y="42" width="42" height="6" fill="#d8e0a0" stroke="#4a6a8a" stroke-width="1"/></svg>
<svg style="left:1482px;top:867px" width="58" height="58" viewBox="0 0 58 58"><rect x="1.5" y="1.5" width="55" height="55" rx="3" fill="#30a030" stroke="#0a4a10" stroke-width="2"/>
<g stroke="#1a6018" stroke-width="1.5" stroke-dasharray="2 3"><path d="M8 5H50M8 53H50M5 8V50M53 8V50"/></g>
<rect x="9" y="9" width="40" height="40" rx="3" fill="url(#gChip)" stroke="#111" stroke-width="1.5"/></svg>
<svg style="left:1634px;top:878px" width="62" height="40" viewBox="0 0 62 40"><path d="M2 38A29 29 0 0 1 60 38H44A13 13 0 0 0 18 38Z" fill="#e8d030" stroke="#3a3a10" stroke-width="1.5"/>
<path d="M2 38A29 29 0 0 1 14 14L22 26A13 13 0 0 0 18 38Z" fill="#40c030"/><path d="M48 14A29 29 0 0 1 60 38H44A13 13 0 0 0 40 26Z" fill="#d02818"/>
<circle cx="30" cy="34" r="6" fill="#e8e8e8" stroke="#555" stroke-width="1.5"/><path d="M30 34L48 26" stroke="#888" stroke-width="2.5"/></svg>
<svg style="left:1792px;top:864px" width="54" height="63" viewBox="0 0 54 63"><rect x="2" y="10" width="50" height="51" rx="4" fill="url(#gHdd)" stroke="#333" stroke-width="1.5"/><rect x="3" y="50" width="48" height="10" fill="#2a2a2a"/><rect x="8" y="54" width="30" height="2" fill="#c86030"/>
<path d="M14 34Q27 24 40 34" fill="none" stroke="#aaa" stroke-width="2"/>
<path d="M19 2H35V16H44L27 34L10 16H19Z" fill="#48d048" stroke="#2a8a2a" stroke-width="1.5"/></svg>
<div class="lab" style="left:1411px;top:395px;">SkinConfig</div>
<div class="lab" style="left:1565px;top:395px;">Volume</div>
<div class="lab" style="left:1719px;top:395px;">Panels</div>
<div class="lab" style="left:1411px;top:743px;">Clipboard</div>
<div class="lab" style="left:1565px;top:743px;">PciDevice</div>
<div class="lab" style="left:1410px;top:944px;">Protection</div>
<div class="lab" style="left:1565px;top:940px;">Graphic</div>
<div class="lab" style="left:1565px;top:968px;">Bench</div>
<div class="lab" style="left:1719px;top:940px;">Network</div>
<div class="lab" style="left:1719px;top:968px;">Speed</div>
<div style="left:1420px;top:380px;width:59px;height:620px;background:transparent"></div>
<div style="left:603px;top:202px;width:876px;height:795px;background:#f5f3e6;border:2px solid #a29f96;border-right-color:#8c8982;border-bottom-color:#6e6a62"></div>
<div style="left:605px;top:204px;width:872px;height:42px;background:#fdfdfb"></div>
<div style="left:605px;top:246px;width:872px;height:2px;background:#a8a59c"></div>
<div class="dt" style="left:615px;top:212px;color:#3c3c3c">Taskbar and Docky configuration</div>
<div style="left:1368px;top:203px;width:52px;height:35px;background:#fdfdfb;border:2px solid #8f8e89;border-top:none;border-radius:0 0 0 5px"></div>
<div style="left:1385px;top:225px;width:16px;height:4px;background:#7f7f7f"></div>
<div style="left:1418px;top:203px;width:53px;height:35px;background:linear-gradient(#dfdfdb,#c3c5c1);border:2px solid #8f8e89;border-top:none;border-radius:0 0 5px 0"></div>
<svg style="left:1436px;top:212px" width="17" height="17" viewBox="0 0 17 17"><path d="M2 2L15 15M15 2L2 15" stroke="#fbfbfb" stroke-width="4"/></svg>
<div style="left:631px;top:276px;width:820px;height:482px;border:2px solid #a8a59c"></div>
<div style="left:645px;top:262px;width:170px;height:30px;background:#f5f3e6"></div>
<div style="left:631px;top:795px;width:820px;height:175px;border:2px solid #a8a59c"></div>
<div style="left:645px;top:781px;width:141px;height:30px;background:#f5f3e6"></div>
<svg width="0" height="0" style="left:0;top:0"><defs><linearGradient id="cbg" x1="0" y1="0" x2="0" y2="1"><stop offset="0" stop-color="#12c8f4"/><stop offset="1" stop-color="#2aa6dc"/></linearGradient></defs></svg>
<svg style="left:653px;top:263px" width="28" height="28" viewBox="0 0 28 28"><rect x="0.5" y="0.5" width="27" height="27" rx="2" fill="url(#cbg)" stroke="#7a9aa6"/><path d="M7 14.5L12 19.5L21.5 9" fill="none" stroke="#fff" stroke-width="4"/></svg>
<div class="dt" style="left:697px;top:263px;">Taskbar</div>
<div class="dt" style="left:740px;top:323px;">Click on image to change position</div>
<svg style="left:653px;top:388px" width="28" height="28" viewBox="0 0 28 28"><rect x="0.5" y="0.5" width="27" height="27" rx="2" fill="url(#cbg)" stroke="#7a9aa6"/><path d="M7 14.5L12 19.5L21.5 9" fill="none" stroke="#fff" stroke-width="4"/></svg>
<div class="dt" style="left:696px;top:389px;">Soften Up</div>
<svg style="left:1078px;top:388px" width="28" height="28" viewBox="0 0 28 28"><rect x="0.5" y="0.5" width="27" height="27" rx="2" fill="url(#cbg)" stroke="#7a9aa6"/><path d="M7 14.5L12 19.5L21.5 9" fill="none" stroke="#fff" stroke-width="4"/></svg>
<div class="dt" style="left:1120px;top:389px;">Clock</div>
<svg style="left:653px;top:434px" width="28" height="28" viewBox="0 0 28 28"><rect x="0.5" y="0.5" width="27" height="27" rx="2" fill="url(#cbg)" stroke="#7a9aa6"/><path d="M7 14.5L12 19.5L21.5 9" fill="none" stroke="#fff" stroke-width="4"/></svg>
<div class="dt" style="left:696px;top:435px;">Soften Down</div>
<svg style="left:1078px;top:434px" width="28" height="28" viewBox="0 0 28 28"><rect x="0.5" y="0.5" width="27" height="27" rx="2" fill="url(#cbg)" stroke="#7a9aa6"/><path d="M7 14.5L12 19.5L21.5 9" fill="none" stroke="#fff" stroke-width="4"/></svg>
<div class="dt" style="left:1120px;top:435px;">Cpu Usage</div>
<svg style="left:653px;top:479px" width="28" height="28" viewBox="0 0 28 28"><rect x="0.5" y="0.5" width="27" height="27" rx="2" fill="url(#cbg)" stroke="#7a9aa6"/><path d="M7 14.5L12 19.5L21.5 9" fill="none" stroke="#fff" stroke-width="4"/></svg>
<div class="dt" style="left:696px;top:480px;">Min Left Button</div>
<svg style="left:1078px;top:479px" width="28" height="28" viewBox="0 0 28 28"><rect x="0.5" y="0.5" width="27" height="27" rx="2" fill="url(#cbg)" stroke="#7a9aa6"/><path d="M7 14.5L12 19.5L21.5 9" fill="none" stroke="#fff" stroke-width="4"/></svg>
<div class="dt" style="left:1120px;top:480px;">Change Language</div>
<svg style="left:653px;top:524px" width="28" height="28" viewBox="0 0 28 28"><rect x="1" y="1" width="26" height="26" rx="1" fill="#fdfdfb" stroke="#8d8b85" stroke-width="2"/></svg>
<div class="dt" style="left:696px;top:525px;">Min Right Button</div>
<svg style="left:1078px;top:524px" width="28" height="28" viewBox="0 0 28 28"><rect x="0.5" y="0.5" width="27" height="27" rx="2" fill="url(#cbg)" stroke="#7a9aa6"/><path d="M7 14.5L12 19.5L21.5 9" fill="none" stroke="#fff" stroke-width="4"/></svg>
<div class="dt" style="left:1120px;top:525px;">Menu Button</div>
<div style="left:653px;top:577px;width:67px;height:35px;background:#fdfdfc;border:2px solid #9c9a93;border-right:none"></div>
<div class="dt" style="left:640px;top:580px;width:70px;text-align:right;color:#444">29</div>
<div style="left:719px;top:577px;width:68px;height:35px;background:linear-gradient(#1aa9b9,#0e8a9a 55%,#0a6f7c);border:1px solid #0b5c68;border-radius:0 5px 5px 0"></div>
<div style="left:751px;top:578px;width:2px;height:33px;background:#0a5965"></div>
<svg style="left:726px;top:584px" width="20" height="20" viewBox="0 0 20 20"><path d="M10 4.5V15.5M4.5 10H15.5" stroke="#0b2328" stroke-width="2.6"/></svg>
<svg style="left:759px;top:584px" width="20" height="20" viewBox="0 0 20 20"><path d="M5 10H15" stroke="#0b2328" stroke-width="2.6"/></svg>
<div class="dt" style="left:805px;top:581px;">Panel Height</div>
<div style="left:653px;top:637px;width:67px;height:35px;background:#fdfdfc;border:2px solid #9c9a93;border-right:none"></div>
<div class="dt" style="left:640px;top:640px;width:70px;text-align:right;color:#444">6</div>
<div style="left:719px;top:637px;width:68px;height:35px;background:linear-gradient(#1aa9b9,#0e8a9a 55%,#0a6f7c);border:1px solid #0b5c68;border-radius:0 5px 5px 0"></div>
<div style="left:751px;top:638px;width:2px;height:33px;background:#0a5965"></div>
<svg style="left:726px;top:644px" width="20" height="20" viewBox="0 0 20 20"><path d="M10 4.5V15.5M4.5 10H15.5" stroke="#0b2328" stroke-width="2.6"/></svg>
<svg style="left:759px;top:644px" width="20" height="20" viewBox="0 0 20 20"><path d="M5 10H15" stroke="#0b2328" stroke-width="2.6"/></svg>
<div class="dt" style="left:805px;top:641px;">Soften Height</div>
<div style="left:653px;top:697px;width:67px;height:35px;background:#fdfdfc;border:2px solid #9c9a93;border-right:none"></div>
<div class="dt" style="left:640px;top:700px;width:70px;text-align:right;color:#444">6</div>
<div style="left:719px;top:697px;width:68px;height:35px;background:linear-gradient(#1aa9b9,#0e8a9a 55%,#0a6f7c);border:1px solid #0b5c68;border-radius:0 5px 5px 0"></div>
<div style="left:751px;top:698px;width:2px;height:33px;background:#0a5965"></div>
<svg style="left:726px;top:704px" width="20" height="20" viewBox="0 0 20 20"><path d="M10 4.5V15.5M4.5 10H15.5" stroke="#0b2328" stroke-width="2.6"/></svg>
<svg style="left:759px;top:704px" width="20" height="20" viewBox="0 0 20 20"><path d="M5 10H15" stroke="#0b2328" stroke-width="2.6"/></svg>
<div class="dt" style="left:805px;top:701px;">Button Offset</div>
<svg style="left:653px;top:782px" width="28" height="28" viewBox="0 0 28 28"><rect x="0.5" y="0.5" width="27" height="27" rx="2" fill="url(#cbg)" stroke="#7a9aa6"/><path d="M7 14.5L12 19.5L21.5 9" fill="none" stroke="#fff" stroke-width="4"/></svg>
<div class="dt" style="left:696px;top:782px;">Docky</div>
<div class="dt" style="left:740px;top:842px;">Click on image to change position</div>
<svg style="left:653px;top:908px" width="28" height="28" viewBox="0 0 28 28"><rect x="1" y="1" width="26" height="26" rx="1" fill="#fdfdfb" stroke="#8d8b85" stroke-width="2"/></svg>
<div class="dt" style="left:696px;top:908px;">Full width</div>
<svg style="left:1078px;top:908px" width="28" height="28" viewBox="0 0 28 28"><rect x="1" y="1" width="26" height="26" rx="1" fill="#fdfdfb" stroke="#8d8b85" stroke-width="2"/></svg>
<div class="dt" style="left:1120px;top:908px;">Always show</div>
<svg style="left:653px;top:310px" width="70" height="50" viewBox="0 0 70 50">
<rect x="1" y="1" width="68" height="48" fill="#a8d4f8" stroke="#3a7ab8" stroke-width="2"/>
<rect x="2" y="2" width="66" height="8" fill="#f4f8fc"/>
<rect x="3" y="4" width="7" height="4" fill="#22aa22"/>
<rect x="14" y="5" width="4" height="2" fill="#999"/><rect x="20" y="5" width="4" height="2" fill="#999"/><rect x="26" y="5" width="4" height="2" fill="#999"/>
<rect x="55" y="5" width="2" height="2" fill="#2a2"/><rect x="60" y="4" width="6" height="4" fill="#12127a"/>
<rect x="2" y="11" width="19" height="19" fill="#f4f8fc" stroke="#3a7ab8" stroke-width="1.5"/>
</svg>
<svg style="left:653px;top:828px" width="70" height="51" viewBox="0 0 70 51">
<rect x="1" y="1" width="68" height="49" fill="#a8d4f8" stroke="#3a7ab8" stroke-width="2"/>
<rect x="13" y="37" width="44" height="13" fill="#f4f8fc" stroke="#3a7ab8" stroke-width="1.5"/>
<rect x="17" y="41" width="5" height="5" fill="#12128a"/><rect x="24" y="41" width="5" height="5" fill="#c8a030"/><rect x="31" y="41" width="5" height="5" fill="#c040a0"/><rect x="38" y="41" width="5" height="5" fill="#333"/><rect x="45" y="41" width="6" height="5" fill="#d01818"/>
</svg>
<div style="left:565px;top:1357px;width:791px;height:78px;background:#f4f2e6"></div>
<div style="left:896px;top:1325px;width:128px;height:32px;background:#f2f0e4"></div>
<div class="mono" style="left:944px;top:1331px;font-size:18.5px;font-weight:bold;color:#2a2a2a;line-height:24px;letter-spacing:0.3px">KIV mp</div>
<div style="left:922px;top:1361px;width:76px;height:74px;background:#0f8a9c"></div>
<div style="left:1167px;top:1365px;width:2px;height:70px;background:#dcd8cc"></div>
<svg style="left:596px;top:1368px" width="66" height="60" viewBox="0 0 66 60"><circle cx="10" cy="7" r="5" fill="#f8e8a0" stroke="#222" stroke-width="2"/>
<path d="M4 18H14V54H4Z" fill="#f0c030" stroke="#222" stroke-width="2.5"/>
<path d="M16 18H34Q40 18 40 26Q40 34 34 34L42 54H32L26 38V54H16Z" fill="#40c838" stroke="#222" stroke-width="2.5"/>
<path d="M40 22Q40 16 48 16H62V26H52V44H62L56 58L50 54H44Q40 54 40 46Z" fill="#d82018" stroke="#222" stroke-width="2.5"/></svg>
<svg style="left:679px;top:1366px" width="64" height="64" viewBox="0 0 64 64"><path d="M32 2L62 14V48L32 62L2 48V14Z" fill="#f4c8a0" stroke="#8a6a50" stroke-width="2"/>
<path d="M2 14L32 26L62 14" fill="none" stroke="#c8a080" stroke-width="1.5"/><path d="M32 26V62" stroke="#c8a080" stroke-width="1.5"/>
<path d="M3 15L31 27V61L3 48Z" fill="#fbe8d8"/><path d="M12 40L20 30L28 40L24 40L24 50L16 50L16 40Z" fill="#d8a080"/></svg>
<svg style="left:767px;top:1367px" width="54" height="62" viewBox="0 0 54 62"><rect x="1.5" y="1.5" width="51" height="59" rx="4" fill="#3a3a3a" stroke="#1a1a1a" stroke-width="2"/><rect x="5" y="4" width="44" height="54" rx="3" fill="#4a4a4a"/>
<circle cx="30" cy="22" r="11" fill="#2a2a20" stroke="#c8b070" stroke-width="3"/><circle cx="30" cy="22" r="3" fill="#c8b070"/>
<circle cx="21" cy="48" r="4" fill="none" stroke="#c8b070" stroke-width="2"/><circle cx="39" cy="48" r="4" fill="none" stroke="#c8b070" stroke-width="2"/></svg>
<svg style="left:853px;top:1369px" width="50" height="60" viewBox="0 0 50 60"><text x="1" y="18" font-family="Liberation Mono" font-weight="bold" font-size="21" fill="#1a2450" textLength="47" lengthAdjust="spacingAndGlyphs">MIDI</text>
<rect x="1.5" y="21" width="47" height="37" rx="4" fill="#1a2450"/><path d="M16 26V52L40 39Z" fill="#78b8f0"/></svg>
<svg style="left:931px;top:1377px" width="58" height="49" viewBox="0 0 58 49"><rect x="0" y="0" width="58" height="49" fill="#f4fcfc"/><rect x="5" y="5" width="48" height="39" fill="url(#gKiv)"/>
<ellipse cx="46" cy="22" rx="5" ry="7" fill="#60a830"/><ellipse cx="32" cy="30" rx="8" ry="6" fill="#f0e040" opacity="0.7"/></svg>
<svg style="left:1011px;top:1374px" width="64" height="54" viewBox="0 0 64 54"><path d="M3 2V52" stroke="#111" stroke-width="3"/><rect x="6" y="8" width="56" height="36" fill="#8cc0e8" stroke="#2a4a6a" stroke-width="1.5"/>
<rect x="22" y="14" width="14" height="14" fill="#333"/><rect x="40" y="14" width="14" height="14" fill="#333"/><circle cx="14" cy="18" r="4" fill="#e0f0f8" stroke="#4a6a8a"/>
<g fill="#1a2a4a"><rect x="10" y="30" width="3" height="10"/><rect x="16" y="34" width="6" height="4"/><rect x="26" y="34" width="4" height="4"/><rect x="34" y="32" width="4" height="6"/></g>
<rect x="46" y="32" width="12" height="8" fill="#e0f0f8"/><rect x="16" y="44" width="42" height="6" fill="#d8e0a0" stroke="#4a6a8a" stroke-width="1"/></svg>
<svg style="left:1096px;top:1369px" width="58" height="58" viewBox="0 0 58 58"><rect x="1.5" y="1.5" width="55" height="55" rx="3" fill="#30a030" stroke="#0a4a10" stroke-width="2"/>
<g stroke="#1a6018" stroke-width="1.5" stroke-dasharray="2 3"><path d="M8 5H50M8 53H50M5 8V50M53 8V50"/></g>
<rect x="9" y="9" width="40" height="40" rx="3" fill="url(#gChip)" stroke="#111" stroke-width="1.5"/></svg>
<svg style="left:1184px;top:1368px" width="52" height="60" viewBox="0 0 52 60"><ellipse cx="43" cy="30" rx="5.5" ry="9" fill="#1a1a1a"/>
<rect x="3" y="15" width="17" height="29" rx="4" fill="url(#gSpk)" stroke="#3a2000" stroke-width="2"/>
<path d="M18 16L30 4Q32 2 35 2H42V58H35Q32 58 30 56L18 44Z" fill="url(#gCone)" stroke="#111" stroke-width="2"/>
<path d="M34 4V56" stroke="#f8f8f8" stroke-width="2.5"/><path d="M25 14Q22 30 25 46" fill="none" stroke="#888" stroke-width="1.5"/></svg>
<svg style="left:1260px;top:1367px" width="62" height="62" viewBox="0 0 62 62"><rect x="1.5" y="1.5" width="59" height="59" rx="3" fill="#f4f4f4" stroke="#a0a0a0" stroke-width="2"/>
<g stroke-width="3"><path d="M8 14H40" stroke="#1a70c8"/><path d="M40 14H54" stroke="#333"/><path d="M8 30H22" stroke="#1a70c8"/><path d="M22 30H54" stroke="#333"/><path d="M8 46H44" stroke="#1a70c8"/><path d="M44 46H54" stroke="#333"/></g>
<g fill="#e8e8e8" stroke="#888" stroke-width="1.5"><rect x="32" y="7" width="11" height="14" rx="2"/><rect x="14" y="23" width="11" height="14" rx="2"/><rect x="36" y="39" width="11" height="14" rx="2"/></g></svg>
<svg style="left:982px;top:1406px" width="26" height="30" viewBox="0 0 26 30"><path d="M2 2V28L8 22L13 30L18 28L13 20L22 20Z" fill="#fafafa" stroke="#111" stroke-width="2"/></svg>
</body></html>
